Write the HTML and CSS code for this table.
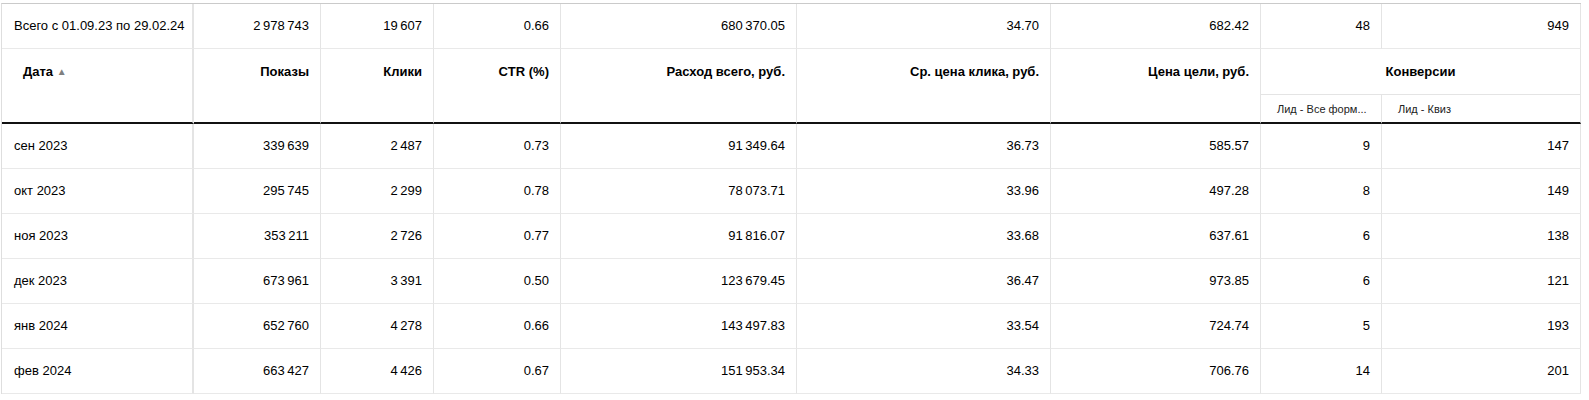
FILE: index.html
```html
<!DOCTYPE html>
<html lang="ru">
<head>
<meta charset="utf-8">
<title>Статистика</title>
<link rel="stylesheet" href="styles.css">
</head>
<body>
<div class="wrap">
<table class="stat">
  <colgroup>
    <col class="c1"><col class="c2"><col class="c3"><col class="c4"><col class="c5"><col class="c6"><col class="c7"><col class="c8"><col class="c9">
  </colgroup>
  <thead>
    <tr class="total">
      <td class="first">Всего с 01.09.23 по 29.02.24</td>
      <td class="num">2&#8239;978&#8239;743</td>
      <td class="num">19&#8239;607</td>
      <td class="num">0.66</td>
      <td class="num">680&#8239;370.05</td>
      <td class="num">34.70</td>
      <td class="num">682.42</td>
      <td class="num">48</td>
      <td class="num">949</td>
    </tr>
    <tr class="head">
      <th rowspan="2" class="first date">Дата <span class="sort">▲</span></th>
      <th rowspan="2" class="num">Показы</th>
      <th rowspan="2" class="num">Клики</th>
      <th rowspan="2" class="num">CTR (%)</th>
      <th rowspan="2" class="num">Расход всего, руб.</th>
      <th rowspan="2" class="num">Ср. цена клика, руб.</th>
      <th rowspan="2" class="num">Цена цели, руб.</th>
      <th colspan="2" class="group">Конверсии</th>
    </tr>
    <tr class="sub">
      <th><span class="subtext">Лид - Все форм...</span></th>
      <th><span class="subtext">Лид - Квиз</span></th>
    </tr>
  </thead>
  <tbody>
    <tr><td class="first">сен 2023</td><td class="num">339&#8239;639</td><td class="num">2&#8239;487</td><td class="num">0.73</td><td class="num">91&#8239;349.64</td><td class="num">36.73</td><td class="num">585.57</td><td class="num">9</td><td class="num">147</td></tr>
    <tr><td class="first">окт 2023</td><td class="num">295&#8239;745</td><td class="num">2&#8239;299</td><td class="num">0.78</td><td class="num">78&#8239;073.71</td><td class="num">33.96</td><td class="num">497.28</td><td class="num">8</td><td class="num">149</td></tr>
    <tr><td class="first">ноя 2023</td><td class="num">353&#8239;211</td><td class="num">2&#8239;726</td><td class="num">0.77</td><td class="num">91&#8239;816.07</td><td class="num">33.68</td><td class="num">637.61</td><td class="num">6</td><td class="num">138</td></tr>
    <tr><td class="first">дек 2023</td><td class="num">673&#8239;961</td><td class="num">3&#8239;391</td><td class="num">0.50</td><td class="num">123&#8239;679.45</td><td class="num">36.47</td><td class="num">973.85</td><td class="num">6</td><td class="num">121</td></tr>
    <tr><td class="first">янв 2024</td><td class="num">652&#8239;760</td><td class="num">4&#8239;278</td><td class="num">0.66</td><td class="num">143&#8239;497.83</td><td class="num">33.54</td><td class="num">724.74</td><td class="num">5</td><td class="num">193</td></tr>
    <tr><td class="first">фев 2024</td><td class="num">663&#8239;427</td><td class="num">4&#8239;426</td><td class="num">0.67</td><td class="num">151&#8239;953.34</td><td class="num">34.33</td><td class="num">706.76</td><td class="num">14</td><td class="num">201</td></tr>
  </tbody>
</table>
</div>
</body>
</html>
```
FILE: styles.css
```css
html, body {
  margin: 0;
  padding: 0;
  background: #fff;
}
body {
  font-family: "Liberation Sans", Arial, sans-serif;
  font-size: 13px;
  color: #000;
}
.wrap {
  padding: 3px 0 0 1px;
}
.stat {
  border-collapse: separate;
  border-spacing: 0;
  table-layout: fixed;
  width: 1580px;
  border-top: 1px solid #cacaca;
  border-left: 1px solid #dedede;
}
.c1 { width: 192px; }
.c2 { width: 127px; }
.c3 { width: 113px; }
.c4 { width: 127px; }
.c5 { width: 236px; }
.c6 { width: 254px; }
.c7 { width: 210px; }
.c8 { width: 121px; }
.c9 { width: 199px; }

.stat td, .stat th {
  border-right: 1px solid #e4e4e4;
  border-bottom: 1px solid #e9e9e9;
  padding: 0 11px 0 12px;
  line-height: 16px;
  white-space: nowrap;
}
.stat td.first, .stat th.first {
  border-right: 2px solid #e4e4e4;
  padding-right: 2px;
}
.num { text-align: right; }

.total td {
  height: 44px;
  vertical-align: middle;
}
.head th {
  font-weight: bold;
  vertical-align: top;
  padding-top: 15px;
  border-bottom: 2px solid #111;
}
.head th.date {
  text-align: left;
  padding-left: 21px;
}
.sort {
  font-size: 10px;
  color: #808080;
  vertical-align: 1px;
}
.head th.group {
  height: 45px;
  padding: 0;
  text-align: center;
  vertical-align: middle;
  border-bottom: 1px solid #e4e4e4;
}
.sub th {
  height: 27px;
  padding: 0 4px 0 16px;
  vertical-align: middle;
  font-weight: normal;
  text-align: left;
  border-bottom: 2px solid #111;
}
.subtext {
  font-size: 11px;
  color: #222;
}
tbody td {
  height: 44px;
  vertical-align: middle;
}
```
